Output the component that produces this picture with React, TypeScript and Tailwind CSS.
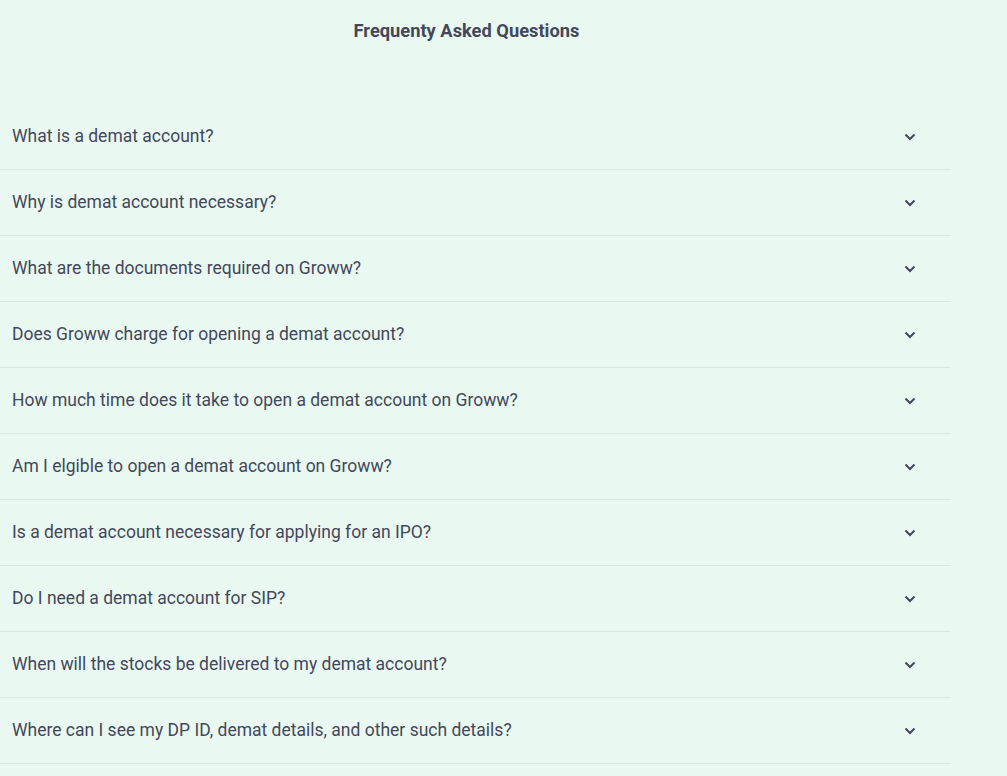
import React from "react";

const questions = [
  "What is a demat account?",
  "Why is demat account necessary?",
  "What are the documents required on Groww?",
  "Does Groww charge for opening a demat account?",
  "How much time does it take to open a demat account on Groww?",
  "Am I elgible to open a demat account on Groww?",
  "Is a demat account necessary for applying for an IPO?",
  "Do I need a demat account for SIP?",
  "When will the stocks be delivered to my demat account?",
  "Where can I see my DP ID, demat details, and other such details?",
];

function Chevron() {
  return (
    <svg width="12" height="8" viewBox="0 0 12 8" fill="none">
      <path d="M1.5 1.5 L6 6 L10.5 1.5" stroke="#44475b" strokeWidth="2" />
    </svg>
  );
}

export default function App() {
  return (
    <div
      className="min-h-[776px] w-full bg-[#e9f9f1] text-[#44475b]"
      style={{ fontFamily: "Roboto, 'Liberation Sans', sans-serif" }}
    >
      <div className="w-[951px]">
        <h2 className="pt-[20px] text-center pr-[18px] text-[18.3px] font-bold leading-[22px]">
          Frequenty Asked Questions
        </h2>
        <div className="mt-[62px]">
          {questions.map((q) => (
            <div
              key={q}
              className="flex h-[66px] items-center justify-between border-b border-[#dbe6e0] pl-[12px] pr-[35px]"
            >
              <span className="-translate-y-px text-[17.5px] leading-[20px]">{q}</span>
              <Chevron />
            </div>
          ))}
        </div>
      </div>
    </div>
  );
}
